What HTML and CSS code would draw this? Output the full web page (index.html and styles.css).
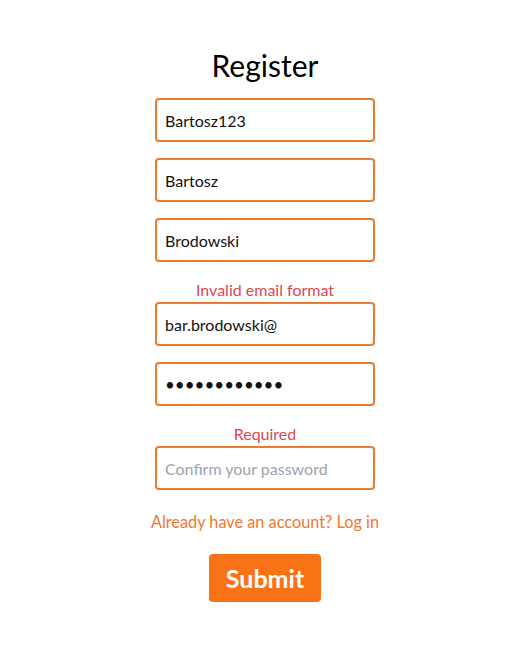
FILE: index.html
```html
<!DOCTYPE html>
<html>
<head>
<meta charset="utf-8">
<link rel="stylesheet" href="styles.css">
</head>
<body>
<div class="page">
  <h1 class="title">Register</h1>
  <form class="form">
    <div class="field"><input class="input" type="text" value="Bartosz123"></div>
    <div class="field"><input class="input" type="text" value="Bartosz"></div>
    <div class="field"><input class="input" type="text" value="Brodowski"></div>
    <div class="field"><div class="error">Invalid email format</div><input class="input" type="text" value="bar.brodowski@"></div>
    <div class="field"><input class="input password" type="password" value="abcdefghijkl"></div>
    <div class="field"><div class="error">Required</div><input class="input" type="password" placeholder="Confirm your password"></div>
    <a class="link" href="#">Already have an account? Log in</a>
    <button class="submit" type="button">Submit</button>
  </form>
</div>
</body>
</html>
```
FILE: styles.css
```css
html, body {
  margin: 0;
  padding: 0;
  background: #ffffff;
}
body {
  font-family: "Segoe UI", Lato, "Noto Sans", sans-serif;
  color: #111111;
}
.page {
  display: flex;
  flex-direction: column;
  align-items: center;
  padding-top: 46px;
  padding-left: 10px;
}
.title {
  margin: 0 0 14px 0;
  font-size: 30px;
  font-weight: 400;
  line-height: 38px;
  color: #000;
}
.form {
  display: flex;
  flex-direction: column;
  align-items: center;
  width: 220px;
}
.field {
  display: flex;
  flex-direction: column;
  align-items: center;
  width: 100%;
  margin-bottom: 16px;
}
.error {
  height: 24px;
  line-height: 24px;
  font-size: 16px;
  color: #dc4654;
}
.input {
  box-sizing: border-box;
  width: 220px;
  height: 44px;
  border: 2px solid #ea7a30;
  border-radius: 4px;
  padding: 0 8px;
  font-family: inherit;
  font-size: 16px;
  color: #111;
  outline: none;
  background: #fff;
}
.input::placeholder {
  color: #9ca3af;
}
.password {
  font-size: 17px;
  letter-spacing: 0;
}
.link {
  margin-top: 4px;
  font-size: 16.3px;
  line-height: 24px;
  color: #f2782c;
  text-decoration: none;
  white-space: nowrap;
}
.submit {
  margin-top: 20px;
  width: 112px;
  height: 48px;
  border: none;
  border-radius: 4px;
  background: #f97316;
  color: #fff;
  font-family: inherit;
  font-size: 25px;
  font-weight: 700;
  padding: 0;
}
```
